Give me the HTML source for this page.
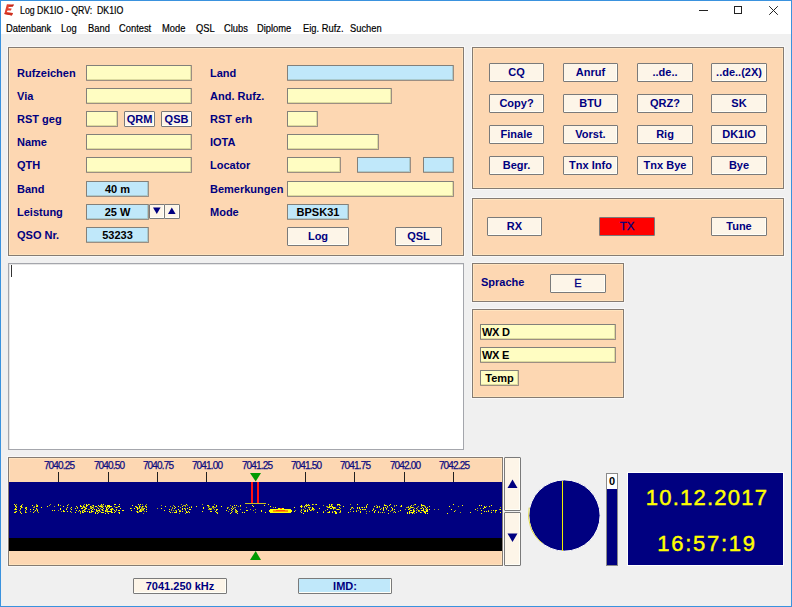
<!DOCTYPE html>
<html><head><meta charset="utf-8">
<style>
*{margin:0;padding:0;box-sizing:border-box}
html,body{width:792px;height:607px;overflow:hidden;background:#f0f0f0;font-family:"Liberation Sans",sans-serif}
.a{position:absolute}
#win{position:absolute;left:0;top:0;width:792px;height:607px;border:1px solid #3a92de}
#tb{position:absolute;left:1px;top:1px;width:790px;height:33px;background:#fff}
.t{position:absolute;white-space:nowrap;font-size:10.5px;color:#000;line-height:10px;transform-origin:0 0;transform:scaleX(0.89);-webkit-text-stroke:0.2px #000}
.pn{position:absolute;background:#fdd7b2;border:1px solid #857b72;box-shadow:0 0 0 1px #f8f8f8,inset 1px 1px 0 #ffe4bf,inset -1px -1px 0 #fee2bc}
.lb{position:absolute;white-space:nowrap;font-size:11px;font-weight:bold;color:#000080;line-height:11px}
.f{position:absolute;height:16px;border:1px solid #82807a;border-right-color:#9c8e82;border-bottom-color:#9c8e82;border-radius:1px;font-size:11px;font-weight:bold;color:#000;text-align:center;line-height:14px;white-space:nowrap;box-shadow:inset -1px -1px 0 rgba(60,60,0,0.18)}
.y{background:#fffdc2}
.bl{background:#c0e8fa}
.b{position:absolute;height:18px;width:56px;border:1px solid #7a7a7a;border-radius:1px;background:#fdf5e8;font-size:11px;font-weight:bold;color:#000080;text-align:center;line-height:16px;white-space:nowrap;box-shadow:inset -1px -1px 0 #fffff8}
</style></head><body>
<div id="win"></div><div id="tb"></div>
<svg class="a" style="left:0;top:0" width="18" height="18" viewBox="0 0 18 18"><polygon points="6.9,4.3 13.9,4.5 12.9,6.6 8.9,6.8 8.2,8.2 11.7,8.5 10.9,10.4 7.5,10.5 6.8,12 12.9,13.1 11.9,15.6 4.3,13.9" fill="#e2402e"/><polygon points="13.9,4.5 12.9,6.6 8.9,6.8 9.4,5.6" fill="#c02818"/><polygon points="12.9,13.1 11.9,15.6 4.3,13.9 5,13" fill="#cc3020"/></svg>
<div class="t" style="left:20px;top:5px;transform:scaleX(0.835)">Log DK1IO - QRV:&nbsp; DK1IO</div>
<div class="a" style="left:699px;top:10px;width:9px;height:1px;background:#222"></div>
<div class="a" style="left:734px;top:6px;width:8px;height:8px;border:1px solid #222"></div>
<svg class="a" style="left:769px;top:6px" width="10" height="10" viewBox="0 0 10 10"><path d="M0.2,0.2 L8.8,8.8 M8.8,0.2 L0.2,8.8" stroke="#222" stroke-width="1"/></svg>
<div class="t" style="left:6px;top:23px">Datenbank</div>
<div class="t" style="left:61px;top:23px">Log</div>
<div class="t" style="left:88px;top:23px">Band</div>
<div class="t" style="left:119px;top:23px">Contest</div>
<div class="t" style="left:162px;top:23px">Mode</div>
<div class="t" style="left:196px;top:23px">QSL</div>
<div class="t" style="left:224px;top:23px">Clubs</div>
<div class="t" style="left:257px;top:23px">Diplome</div>
<div class="t" style="left:303px;top:23px">Eig. Rufz.</div>
<div class="t" style="left:350px;top:23px">Suchen</div>
<div class="pn" style="left:8px;top:47px;width:456px;height:209px"></div>
<div class="lb" style="left:17px;top:68px">Rufzeichen</div>
<div class="lb" style="left:17px;top:91px">Via</div>
<div class="lb" style="left:17px;top:114px">RST geg</div>
<div class="lb" style="left:17px;top:137px">Name</div>
<div class="lb" style="left:17px;top:160px">QTH</div>
<div class="lb" style="left:17px;top:184px">Band</div>
<div class="lb" style="left:17px;top:207px">Leistung</div>
<div class="lb" style="left:17px;top:230px">QSO Nr.</div>
<div class="f y" style="left:86px;top:65px;width:106px"></div>
<div class="f y" style="left:86px;top:88px;width:106px"></div>
<div class="f y" style="left:86px;top:111px;width:32px"></div>
<div class="b" style="left:124px;top:111px;width:31px;height:16px;line-height:14px">QRM</div>
<div class="b" style="left:161px;top:111px;width:31px;height:16px;line-height:14px">QSB</div>
<div class="f y" style="left:86px;top:134px;width:106px"></div>
<div class="f y" style="left:86px;top:157px;width:106px"></div>
<div class="f bl" style="left:86px;top:181px;width:63px">40 m</div>
<div class="f bl" style="left:86px;top:204px;width:63px">25 W</div>
<div class="f bl" style="left:86px;top:227px;width:63px">53233</div>
<div class="b" style="left:149px;top:204px;width:16px;height:15px;line-height:13px"></div>
<div class="b" style="left:164px;top:204px;width:16px;height:15px;line-height:13px"></div>
<svg class="a" style="left:153px;top:207px" width="8" height="8"><polygon points="0,0.5 7.6,0.5 3.8,7" fill="#000080"/></svg>
<svg class="a" style="left:168px;top:207px" width="8" height="8"><polygon points="0,7 7.6,7 3.8,0.5" fill="#000080"/></svg>
<div class="lb" style="left:210px;top:68px">Land</div>
<div class="lb" style="left:210px;top:91px">And. Rufz.</div>
<div class="lb" style="left:210px;top:114px">RST erh</div>
<div class="lb" style="left:210px;top:137px">IOTA</div>
<div class="lb" style="left:210px;top:160px">Locator</div>
<div class="lb" style="left:210px;top:184px">Bemerkungen</div>
<div class="lb" style="left:210px;top:207px">Mode</div>
<div class="f bl" style="left:287px;top:65px;width:167px"></div>
<div class="f y" style="left:287px;top:88px;width:105px"></div>
<div class="f y" style="left:287px;top:111px;width:31px"></div>
<div class="f y" style="left:287px;top:134px;width:92px"></div>
<div class="f y" style="left:287px;top:157px;width:54px"></div>
<div class="f bl" style="left:357px;top:157px;width:54px"></div>
<div class="f bl" style="left:423px;top:157px;width:31px"></div>
<div class="f y" style="left:287px;top:181px;width:167px"></div>
<div class="f bl" style="left:287px;top:204px;width:62px">BPSK31</div>
<div class="b" style="left:287px;top:227px;width:62px;height:19px;line-height:17px">Log</div>
<div class="b" style="left:395px;top:227px;width:47px;height:19px;line-height:17px">QSL</div>
<div class="pn" style="left:472px;top:47px;width:312px;height:142px"></div>
<div class="b" style="left:489px;top:63px;width:55px;height:19px;line-height:17px">CQ</div>
<div class="b" style="left:563px;top:63px;width:55px;height:19px;line-height:17px">Anruf</div>
<div class="b" style="left:637px;top:63px;width:56px;height:19px;line-height:17px">..de..</div>
<div class="b" style="left:711px;top:63px;width:56px;height:19px;line-height:17px">..de..(2X)</div>
<div class="b" style="left:489px;top:94px;width:55px;height:19px;line-height:17px">Copy?</div>
<div class="b" style="left:563px;top:94px;width:55px;height:19px;line-height:17px">BTU</div>
<div class="b" style="left:637px;top:94px;width:56px;height:19px;line-height:17px">QRZ?</div>
<div class="b" style="left:711px;top:94px;width:56px;height:19px;line-height:17px">SK</div>
<div class="b" style="left:489px;top:125px;width:55px;height:19px;line-height:17px">Finale</div>
<div class="b" style="left:563px;top:125px;width:55px;height:19px;line-height:17px">Vorst.</div>
<div class="b" style="left:637px;top:125px;width:56px;height:19px;line-height:17px">Rig</div>
<div class="b" style="left:711px;top:125px;width:56px;height:19px;line-height:17px">DK1IO</div>
<div class="b" style="left:489px;top:156px;width:55px;height:19px;line-height:17px">Begr.</div>
<div class="b" style="left:563px;top:156px;width:55px;height:19px;line-height:17px">Tnx Info</div>
<div class="b" style="left:637px;top:156px;width:56px;height:19px;line-height:17px">Tnx Bye</div>
<div class="b" style="left:711px;top:156px;width:56px;height:19px;line-height:17px">Bye</div>
<div class="pn" style="left:472px;top:198px;width:312px;height:58px"></div>
<div class="b" style="left:487px;top:217px;width:55px;height:19px;line-height:17px">RX</div>
<div class="b" style="left:599px;top:217px;width:56px;height:19px;line-height:17px;background:#ff0000;font-weight:normal;box-shadow:none;font-size:11.5px;-webkit-text-stroke:0.3px #000080">TX</div>
<div class="b" style="left:711px;top:217px;width:56px;height:19px;line-height:17px">Tune</div>
<div class="a" style="left:8px;top:263px;width:456px;height:187px;background:#fff;border:1px solid #a4a6ac;box-shadow:inset 1px 1px 0 #e6e6e6"></div>
<div class="a" style="left:11px;top:265px;width:1px;height:12px;background:#333"></div>
<div class="pn" style="left:472px;top:263px;width:152px;height:39px"></div>
<div class="lb" style="left:481px;top:277px">Sprache</div>
<div class="b" style="left:550px;top:274px;width:56px;height:19px;line-height:17px;font-weight:normal;font-size:11px;-webkit-text-stroke:0.3px #000080">E</div>
<div class="pn" style="left:472px;top:309px;width:152px;height:89px"></div>
<div class="f y" style="left:480px;top:324px;width:136px;text-align:left;padding-left:1px;letter-spacing:-0.3px">WX D</div>
<div class="f y" style="left:480px;top:347px;width:136px;text-align:left;padding-left:1px;letter-spacing:-0.3px">WX E</div>
<div class="f y" style="left:480px;top:370px;width:39px">Temp</div>
<div class="pn" style="left:8px;top:457px;width:495px;height:109px"></div>
<div class="a" style="left:9px;top:482px;width:493px;height:56px;background:#000080"></div>
<div class="a" style="left:9px;top:538px;width:493px;height:13px;background:#000"></div>
<svg class="a" style="left:9px;top:458px" width="493" height="106" viewBox="9 458 493 106"><g fill="#0c0c80" stroke="#0c0c80" stroke-width="0.25" font-family="Liberation Sans" font-size="10" text-anchor="middle" letter-spacing="-0.85"><text x="59" y="469">7040.25</text><text x="109" y="469">7040.50</text><text x="158" y="469">7040.75</text><text x="207" y="469">7041.00</text><text x="257" y="469">7041.25</text><text x="306" y="469">7041.50</text><text x="355" y="469">7041.75</text><text x="405" y="469">7042.00</text><text x="454" y="469">7042.25</text></g><g fill="#202020"><rect x="58" y="472" width="1" height="10"/><rect x="108" y="472" width="1" height="10"/><rect x="157" y="472" width="1" height="10"/><rect x="206" y="472" width="1" height="10"/><rect x="305" y="472" width="1" height="10"/><rect x="354" y="472" width="1" height="10"/><rect x="404" y="472" width="1" height="10"/><rect x="453" y="472" width="1" height="10"/></g><polygon points="250,473 261,473 255.7,481.5" fill="#009a00"/><polygon points="250,560 261,560 255.7,551" fill="#009a00"/><rect x="251" y="482" width="2" height="22" fill="#ff1010"/><rect x="257" y="482" width="2" height="22" fill="#ff1010"/><rect x="245" y="503" width="21" height="1" fill="#c8c020"/><g><path fill="#ffff00" d="M14 504h1v1h-1zM58 504h1v1h-1zM86 504h1v1h-1zM88 504h1v1h-1zM101 504h1v1h-1zM103 504h1v1h-1zM114 504h2v1h-2zM119 504h1v1h-1zM138 504h1v1h-1zM140 504h1v1h-1zM186 504h1v1h-1zM268 504h1v1h-1zM306 504h1v1h-1zM308 504h1v1h-1zM312 504h1v1h-1zM316 504h1v1h-1zM329 504h1v1h-1zM331 504h1v1h-1zM337 504h3v1h-3zM357 504h1v1h-1zM367 504h1v1h-1zM390 504h1v1h-1zM415 504h1v1h-1zM421 504h1v1h-1zM453 504h1v1h-1zM15 505h1v1h-1zM21 505h1v1h-1zM32 505h1v1h-1zM37 505h1v1h-1zM58 505h1v1h-1zM67 505h1v1h-1zM80 505h1v1h-1zM86 505h2v1h-2zM93 505h1v1h-1zM98 505h1v1h-1zM107 505h3v1h-3zM132 505h1v1h-1zM207 505h2v1h-2zM216 505h1v1h-1zM234 505h1v1h-1zM236 505h1v1h-1zM240 505h1v1h-1zM252 505h1v1h-1zM264 505h1v1h-1zM301 505h1v1h-1zM305 505h1v1h-1zM307 505h1v1h-1zM309 505h1v1h-1zM331 505h1v1h-1zM384 505h2v1h-2zM389 505h1v1h-1zM396 505h1v1h-1zM401 505h1v1h-1zM411 505h1v1h-1zM421 505h3v1h-3zM462 505h1v1h-1zM479 505h1v1h-1zM481 505h1v1h-1zM491 505h1v1h-1zM15 506h1v1h-1zM20 506h2v1h-2zM36 506h2v1h-2zM47 506h1v1h-1zM63 506h1v1h-1zM76 506h1v1h-1zM80 506h2v1h-2zM83 506h1v1h-1zM86 506h1v1h-1zM90 506h1v1h-1zM95 506h2v1h-2zM99 506h3v1h-3zM105 506h1v1h-1zM107 506h5v1h-5zM118 506h2v1h-2zM135 506h1v1h-1zM139 506h1v1h-1zM142 506h1v1h-1zM145 506h1v1h-1zM165 506h1v1h-1zM174 506h1v1h-1zM178 506h1v1h-1zM182 506h1v1h-1zM196 506h1v1h-1zM213 506h1v1h-1zM216 506h1v1h-1zM221 506h1v1h-1zM232 506h1v1h-1zM253 506h1v1h-1zM270 506h1v1h-1zM300 506h2v1h-2zM304 506h1v1h-1zM306 506h1v1h-1zM329 506h2v1h-2zM332 506h1v1h-1zM343 506h1v1h-1zM366 506h1v1h-1zM374 506h1v1h-1zM377 506h1v1h-1zM379 506h1v1h-1zM387 506h1v1h-1zM401 506h1v1h-1zM410 506h1v1h-1zM429 506h1v1h-1zM449 506h1v1h-1zM484 506h1v1h-1zM489 506h1v1h-1zM16 507h1v1h-1zM21 507h1v1h-1zM26 507h1v1h-1zM41 507h1v1h-1zM67 507h1v1h-1zM71 507h1v1h-1zM77 507h1v1h-1zM84 507h1v1h-1zM92 507h1v1h-1zM102 507h1v1h-1zM106 507h1v1h-1zM109 507h1v1h-1zM116 507h1v1h-1zM136 507h2v1h-2zM139 507h1v1h-1zM146 507h1v1h-1zM175 507h1v1h-1zM189 507h1v1h-1zM191 507h1v1h-1zM203 507h1v1h-1zM275 507h1v1h-1zM294 507h1v1h-1zM301 507h1v1h-1zM308 507h1v1h-1zM312 507h1v1h-1zM328 507h2v1h-2zM332 507h3v1h-3zM339 507h1v1h-1zM352 507h1v1h-1zM357 507h1v1h-1zM359 507h1v1h-1zM362 507h1v1h-1zM364 507h1v1h-1zM366 507h1v1h-1zM377 507h1v1h-1zM383 507h1v1h-1zM385 507h1v1h-1zM391 507h1v1h-1zM408 507h1v1h-1zM411 507h2v1h-2zM422 507h1v1h-1zM425 507h1v1h-1zM427 507h1v1h-1zM484 507h2v1h-2zM15 508h1v1h-1zM20 508h1v1h-1zM25 508h1v1h-1zM36 508h1v1h-1zM60 508h1v1h-1zM75 508h1v1h-1zM81 508h2v1h-2zM85 508h2v1h-2zM91 508h1v1h-1zM98 508h1v1h-1zM103 508h1v1h-1zM106 508h1v1h-1zM108 508h1v1h-1zM112 508h1v1h-1zM120 508h1v1h-1zM130 508h1v1h-1zM134 508h1v1h-1zM137 508h1v1h-1zM144 508h1v1h-1zM161 508h1v1h-1zM174 508h1v1h-1zM182 508h1v1h-1zM184 508h1v1h-1zM187 508h1v1h-1zM203 508h1v1h-1zM209 508h1v1h-1zM227 508h1v1h-1zM231 508h1v1h-1zM233 508h1v1h-1zM278 508h2v1h-2zM282 508h2v1h-2zM312 508h2v1h-2zM319 508h1v1h-1zM330 508h2v1h-2zM333 508h1v1h-1zM357 508h1v1h-1zM359 508h1v1h-1zM383 508h1v1h-1zM386 508h1v1h-1zM392 508h1v1h-1zM409 508h1v1h-1zM416 508h1v1h-1zM421 508h1v1h-1zM423 508h1v1h-1zM426 508h1v1h-1zM483 508h1v1h-1zM15 509h2v1h-2zM26 509h1v1h-1zM30 509h1v1h-1zM33 509h1v1h-1zM60 509h1v1h-1zM66 509h1v1h-1zM71 509h1v1h-1zM84 509h1v1h-1zM92 509h1v1h-1zM94 509h1v1h-1zM96 509h1v1h-1zM102 509h1v1h-1zM106 509h2v1h-2zM110 509h2v1h-2zM116 509h1v1h-1zM137 509h1v1h-1zM140 509h1v1h-1zM143 509h1v1h-1zM146 509h1v1h-1zM169 509h1v1h-1zM178 509h1v1h-1zM182 509h1v1h-1zM185 509h1v1h-1zM189 509h2v1h-2zM210 509h1v1h-1zM216 509h2v1h-2zM232 509h1v1h-1zM235 509h1v1h-1zM270 509h21v1h-21zM309 509h1v1h-1zM312 509h1v1h-1zM327 509h1v1h-1zM337 509h2v1h-2zM350 509h1v1h-1zM360 509h1v1h-1zM362 509h1v1h-1zM365 509h1v1h-1zM373 509h1v1h-1zM380 509h1v1h-1zM383 509h1v1h-1zM392 509h1v1h-1zM394 509h1v1h-1zM408 509h1v1h-1zM413 509h1v1h-1zM423 509h1v1h-1zM427 509h1v1h-1zM429 509h1v1h-1zM451 509h1v1h-1zM475 509h1v1h-1zM500 509h1v1h-1zM35 510h1v1h-1zM37 510h1v1h-1zM52 510h1v1h-1zM54 510h1v1h-1zM63 510h1v1h-1zM76 510h1v1h-1zM79 510h1v1h-1zM83 510h1v1h-1zM91 510h1v1h-1zM96 510h1v1h-1zM98 510h2v1h-2zM102 510h1v1h-1zM105 510h1v1h-1zM111 510h1v1h-1zM114 510h1v1h-1zM118 510h2v1h-2zM122 510h2v1h-2zM131 510h1v1h-1zM140 510h1v1h-1zM164 510h1v1h-1zM216 510h1v1h-1zM226 510h1v1h-1zM231 510h1v1h-1zM236 510h1v1h-1zM246 510h2v1h-2zM261 510h1v1h-1zM269 510h4v1h-4zM288 510h4v1h-4zM301 510h1v1h-1zM305 510h1v1h-1zM307 510h1v1h-1zM310 510h1v1h-1zM372 510h1v1h-1zM375 510h1v1h-1zM383 510h1v1h-1zM388 510h1v1h-1zM400 510h1v1h-1zM410 510h2v1h-2zM413 510h1v1h-1zM418 510h1v1h-1zM421 510h3v1h-3zM426 510h2v1h-2zM481 510h1v1h-1zM493 510h1v1h-1zM495 510h2v1h-2zM16 511h1v1h-1zM63 511h2v1h-2zM67 511h1v1h-1zM70 511h1v1h-1zM80 511h1v1h-1zM82 511h1v1h-1zM84 511h2v1h-2zM87 511h1v1h-1zM89 511h1v1h-1zM91 511h2v1h-2zM97 511h1v1h-1zM105 511h1v1h-1zM107 511h5v1h-5zM115 511h1v1h-1zM137 511h1v1h-1zM139 511h3v1h-3zM146 511h1v1h-1zM169 511h1v1h-1zM176 511h1v1h-1zM179 511h2v1h-2zM182 511h1v1h-1zM186 511h1v1h-1zM188 511h1v1h-1zM202 511h1v1h-1zM210 511h2v1h-2zM215 511h1v1h-1zM237 511h1v1h-1zM261 511h1v1h-1zM269 511h4v1h-4zM288 511h4v1h-4zM294 511h1v1h-1zM304 511h2v1h-2zM307 511h1v1h-1zM329 511h1v1h-1zM334 511h2v1h-2zM340 511h1v1h-1zM353 511h1v1h-1zM356 511h1v1h-1zM360 511h1v1h-1zM374 511h1v1h-1zM394 511h1v1h-1zM409 511h1v1h-1zM413 511h2v1h-2zM424 511h1v1h-1zM426 511h2v1h-2zM454 511h1v1h-1zM484 511h1v1h-1zM486 511h1v1h-1zM488 511h1v1h-1zM14 512h2v1h-2zM20 512h1v1h-1zM25 512h1v1h-1zM33 512h1v1h-1zM75 512h1v1h-1zM82 512h2v1h-2zM89 512h1v1h-1zM95 512h1v1h-1zM98 512h1v1h-1zM101 512h3v1h-3zM111 512h2v1h-2zM114 512h1v1h-1zM119 512h1v1h-1zM137 512h1v1h-1zM170 512h1v1h-1zM174 512h3v1h-3zM186 512h2v1h-2zM189 512h1v1h-1zM216 512h1v1h-1zM231 512h1v1h-1zM236 512h1v1h-1zM242 512h1v1h-1zM244 512h1v1h-1zM265 512h1v1h-1zM270 512h21v1h-21zM301 512h1v1h-1zM317 512h1v1h-1zM323 512h1v1h-1zM328 512h2v1h-2zM332 512h1v1h-1zM335 512h2v1h-2zM348 512h1v1h-1zM360 512h1v1h-1zM374 512h1v1h-1zM378 512h1v1h-1zM382 512h1v1h-1zM395 512h1v1h-1zM407 512h1v1h-1zM409 512h1v1h-1zM411 512h3v1h-3zM416 512h1v1h-1zM420 512h1v1h-1zM424 512h2v1h-2zM470 512h1v1h-1zM491 512h1v1h-1zM500 512h1v1h-1zM21 513h1v1h-1zM95 513h1v1h-1zM97 513h1v1h-1zM105 513h1v1h-1zM108 513h1v1h-1zM119 513h1v1h-1zM217 513h1v1h-1zM230 513h1v1h-1zM237 513h1v1h-1zM303 513h1v1h-1zM335 513h2v1h-2zM388 513h1v1h-1zM407 513h1v1h-1zM409 513h1v1h-1zM412 513h1v1h-1zM425 513h1v1h-1zM427 513h1v1h-1zM447 513h1v1h-1zM481 513h1v1h-1z"/><path fill="#a8a818" d="M16 504h1v1h-1zM22 504h1v1h-1zM36 504h1v1h-1zM50 504h1v1h-1zM68 504h1v1h-1zM84 504h1v1h-1zM89 504h1v1h-1zM142 504h1v1h-1zM146 504h1v1h-1zM181 504h1v1h-1zM202 504h1v1h-1zM214 504h1v1h-1zM313 504h1v1h-1zM315 504h1v1h-1zM332 504h1v1h-1zM350 504h1v1h-1zM384 504h1v1h-1zM414 504h1v1h-1zM36 505h1v1h-1zM49 505h1v1h-1zM60 505h1v1h-1zM83 505h1v1h-1zM92 505h1v1h-1zM100 505h3v1h-3zM105 505h1v1h-1zM139 505h1v1h-1zM145 505h1v1h-1zM161 505h1v1h-1zM173 505h1v1h-1zM183 505h3v1h-3zM187 505h1v1h-1zM230 505h1v1h-1zM306 505h1v1h-1zM308 505h1v1h-1zM323 505h1v1h-1zM329 505h1v1h-1zM337 505h1v1h-1zM339 505h2v1h-2zM366 505h1v1h-1zM376 505h1v1h-1zM386 505h1v1h-1zM394 505h1v1h-1zM413 505h1v1h-1zM424 505h1v1h-1zM16 506h1v1h-1zM34 506h1v1h-1zM54 506h1v1h-1zM84 506h1v1h-1zM91 506h1v1h-1zM93 506h1v1h-1zM102 506h2v1h-2zM114 506h1v1h-1zM136 506h1v1h-1zM140 506h1v1h-1zM143 506h1v1h-1zM146 506h1v1h-1zM170 506h1v1h-1zM185 506h1v1h-1zM191 506h1v1h-1zM208 506h2v1h-2zM212 506h1v1h-1zM238 506h1v1h-1zM240 506h1v1h-1zM302 506h1v1h-1zM326 506h2v1h-2zM331 506h1v1h-1zM394 506h1v1h-1zM400 506h1v1h-1zM408 506h1v1h-1zM418 506h1v1h-1zM421 506h1v1h-1zM424 506h2v1h-2zM458 506h1v1h-1zM486 506h1v1h-1zM22 507h1v1h-1zM25 507h1v1h-1zM33 507h2v1h-2zM82 507h2v1h-2zM85 507h1v1h-1zM90 507h2v1h-2zM93 507h1v1h-1zM97 507h1v1h-1zM101 507h1v1h-1zM107 507h1v1h-1zM115 507h1v1h-1zM117 507h1v1h-1zM141 507h2v1h-2zM172 507h1v1h-1zM180 507h1v1h-1zM208 507h1v1h-1zM212 507h4v1h-4zM227 507h2v1h-2zM232 507h1v1h-1zM234 507h2v1h-2zM246 507h1v1h-1zM273 507h1v1h-1zM304 507h1v1h-1zM309 507h2v1h-2zM327 507h1v1h-1zM335 507h1v1h-1zM351 507h1v1h-1zM361 507h1v1h-1zM376 507h1v1h-1zM379 507h1v1h-1zM387 507h1v1h-1zM406 507h2v1h-2zM410 507h1v1h-1zM413 507h1v1h-1zM417 507h1v1h-1zM500 507h1v1h-1zM26 508h1v1h-1zM66 508h1v1h-1zM70 508h1v1h-1zM77 508h1v1h-1zM90 508h1v1h-1zM93 508h1v1h-1zM100 508h1v1h-1zM111 508h1v1h-1zM131 508h1v1h-1zM138 508h2v1h-2zM141 508h3v1h-3zM157 508h1v1h-1zM172 508h1v1h-1zM185 508h1v1h-1zM210 508h2v1h-2zM213 508h1v1h-1zM305 508h1v1h-1zM309 508h1v1h-1zM334 508h2v1h-2zM340 508h1v1h-1zM351 508h1v1h-1zM353 508h1v1h-1zM373 508h1v1h-1zM381 508h1v1h-1zM410 508h1v1h-1zM414 508h1v1h-1zM420 508h1v1h-1zM477 508h1v1h-1zM480 508h1v1h-1zM14 509h1v1h-1zM20 509h1v1h-1zM36 509h2v1h-2zM85 509h1v1h-1zM88 509h2v1h-2zM99 509h1v1h-1zM101 509h1v1h-1zM112 509h2v1h-2zM141 509h2v1h-2zM171 509h1v1h-1zM208 509h2v1h-2zM211 509h1v1h-1zM214 509h1v1h-1zM229 509h1v1h-1zM240 509h1v1h-1zM250 509h1v1h-1zM255 509h1v1h-1zM301 509h1v1h-1zM303 509h1v1h-1zM307 509h1v1h-1zM311 509h1v1h-1zM313 509h2v1h-2zM333 509h1v1h-1zM336 509h1v1h-1zM339 509h1v1h-1zM363 509h2v1h-2zM386 509h1v1h-1zM405 509h1v1h-1zM409 509h1v1h-1zM417 509h1v1h-1zM425 509h2v1h-2zM434 509h1v1h-1zM438 509h1v1h-1zM499 509h1v1h-1zM19 510h1v1h-1zM25 510h1v1h-1zM58 510h1v1h-1zM82 510h1v1h-1zM84 510h1v1h-1zM97 510h1v1h-1zM103 510h1v1h-1zM106 510h2v1h-2zM116 510h1v1h-1zM139 510h1v1h-1zM141 510h3v1h-3zM171 510h1v1h-1zM173 510h1v1h-1zM175 510h2v1h-2zM179 510h2v1h-2zM185 510h1v1h-1zM235 510h1v1h-1zM253 510h1v1h-1zM295 510h1v1h-1zM304 510h1v1h-1zM311 510h1v1h-1zM313 510h1v1h-1zM325 510h1v1h-1zM340 510h1v1h-1zM356 510h1v1h-1zM358 510h1v1h-1zM391 510h2v1h-2zM414 510h1v1h-1zM416 510h1v1h-1zM419 510h1v1h-1zM455 510h1v1h-1zM477 510h1v1h-1zM488 510h1v1h-1zM491 510h1v1h-1zM15 511h1v1h-1zM20 511h1v1h-1zM25 511h1v1h-1zM30 511h1v1h-1zM34 511h1v1h-1zM37 511h1v1h-1zM61 511h1v1h-1zM78 511h1v1h-1zM93 511h1v1h-1zM96 511h1v1h-1zM99 511h2v1h-2zM106 511h1v1h-1zM136 511h1v1h-1zM144 511h1v1h-1zM228 511h1v1h-1zM232 511h1v1h-1zM235 511h2v1h-2zM300 511h1v1h-1zM323 511h1v1h-1zM332 511h1v1h-1zM350 511h1v1h-1zM366 511h1v1h-1zM369 511h1v1h-1zM378 511h1v1h-1zM390 511h1v1h-1zM398 511h1v1h-1zM418 511h2v1h-2zM423 511h1v1h-1zM425 511h1v1h-1zM495 511h1v1h-1zM26 512h1v1h-1zM38 512h1v1h-1zM71 512h1v1h-1zM80 512h1v1h-1zM90 512h2v1h-2zM107 512h1v1h-1zM118 512h1v1h-1zM138 512h1v1h-1zM172 512h1v1h-1zM217 512h1v1h-1zM235 512h1v1h-1zM255 512h1v1h-1zM327 512h1v1h-1zM339 512h2v1h-2zM380 512h1v1h-1zM384 512h1v1h-1zM393 512h1v1h-1zM410 512h1v1h-1zM421 512h1v1h-1zM460 512h1v1h-1zM495 512h1v1h-1zM80 513h1v1h-1zM143 513h1v1h-1zM179 513h1v1h-1zM185 513h1v1h-1zM366 513h1v1h-1zM414 513h1v1h-1z"/><path fill="#ff3000" d="M280 508h2v1h-2z"/><path fill="#ff9a00" d="M273 510h3v1h-3zM285 510h3v1h-3zM273 511h15v1h-15z"/><path fill="#ff5000" d="M276 510h9v1h-9z"/></g></svg>
<div class="b" style="left:504px;top:457px;width:17px;height:54px;line-height:52px"></div>
<div class="b" style="left:504px;top:512px;width:17px;height:54px;line-height:52px"></div>
<svg class="a" style="left:507px;top:479px" width="11" height="10"><polygon points="0.5,9 10.5,9 5.5,0.5" fill="#000080"/></svg>
<svg class="a" style="left:507px;top:533px" width="11" height="10"><polygon points="0.5,0.5 10.5,0.5 5.5,9" fill="#000080"/></svg>
<svg class="a" style="left:527px;top:478px" width="76" height="76"><circle cx="37.5" cy="37.5" r="35.6" fill="#000080" stroke="#fafafa" stroke-width="1"/><path d="M15.4,65.2 A35.4,35.4 0 0 1 2.2,29.6" fill="none" stroke="#d8d000" stroke-width="0.7"/><rect x="35" y="3" width="1" height="70" fill="#f0f000"/></svg>
<div class="a" style="left:606px;top:473px;width:12px;height:93px;background:#000080;border:1px solid #8a8a8a"></div>
<div class="a" style="left:607px;top:474px;width:10px;height:15px;background:#fff;font-size:11px;font-weight:bold;text-align:center;line-height:15px">0</div>
<div class="a" style="left:628px;top:473px;width:155px;height:92px;background:#000080;box-shadow:0 0 0 1px #fff"></div>
<div class="a" style="left:629px;top:487px;width:156px;text-align:center;color:#ffff00;font-size:22px;line-height:22px;letter-spacing:1.25px;-webkit-text-stroke:0.45px #ffff00">10.12.2017</div>
<div class="a" style="left:629px;top:533px;width:156px;text-align:center;color:#ffff00;font-size:22px;line-height:22px;letter-spacing:1.75px;-webkit-text-stroke:0.45px #ffff00">16:57:19</div>
<div class="b" style="left:133px;top:578px;width:94px;height:16px;line-height:14px">7041.250 kHz</div>
<div class="b" style="left:298px;top:578px;width:94px;height:16px;line-height:14px;background:#c0e8fa">IMD:</div>
</body></html>
